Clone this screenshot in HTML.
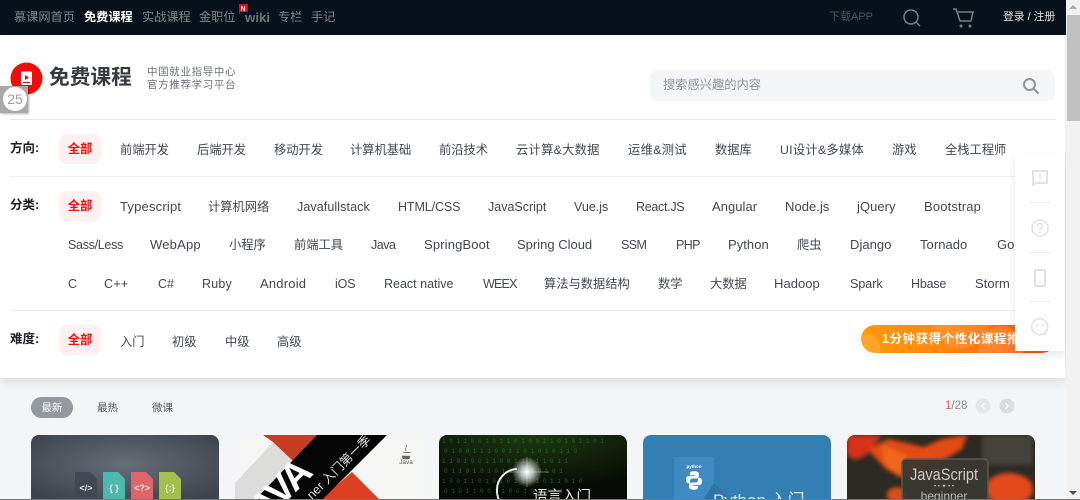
<!DOCTYPE html>
<html lang="zh-CN"><head><meta charset="utf-8"><title>免费课程</title>
<style>
html,body{margin:0;padding:0;width:1080px;height:500px;overflow:hidden}
body{background:#f3f5f7;position:relative;font-family:"Liberation Sans","Noto Sans CJK SC",sans-serif;color:#4d555d}
.a{position:absolute;white-space:nowrap}
#hd{position:absolute;left:0;top:0;width:1066px;height:34.5px;background:#07111b}
#hd span{position:absolute;top:9px;font-size:12.2px;line-height:17px;color:#80858a;white-space:nowrap}
#panel{position:absolute;left:0;top:35px;width:1065px;height:343px;background:#fff;box-shadow:0 4px 8px rgba(7,17,27,.1)}
.f span{position:absolute;font-size:12.5px;line-height:18px;color:#41484f;white-space:nowrap}
.f .c{font-size:12.25px}
.f .w{font-size:13px}
.lbl{position:absolute;left:10px;font-size:12.5px;font-weight:700;color:#1c1f21;line-height:18px}
.on{position:absolute;left:59px;width:42px;height:30px;background:#fdf0f0;border-radius:8px;color:#f20d0d;font-size:12.3px;font-weight:700;line-height:31px;text-align:center}
.ln{position:absolute;left:10px;width:1046px;height:1px;background:#eceef0}
.card{position:absolute;top:435px;width:188px;height:64px;border-radius:8px 8px 0 0;overflow:hidden}
.card svg{display:block}
</style></head><body>
<div id="hd">
<span style="left:14px">慕课网首页</span>
<span style="left:84px;color:#fff;font-weight:700">免费课程</span>
<span style="left:142px">实战课程</span>
<span style="left:199px">金职位</span>
<span style="left:245px;font-size:13.3px;font-weight:700;color:#6f747a">wiki</span>
<span style="left:278px">专栏</span>
<span style="left:311px">手记</span>
<span style="left:829px;font-size:11px;color:#4c535a">下载APP</span>
<span style="left:1003px;font-size:10.8px;color:#e2e3e4">登录 / 注册</span>
<svg class="a" style="left:238px;top:3px" width="10" height="12"><path d="M1 1h9v8H2.300L1 12z" fill="#e00d0d"/><text x="2.500" y="8" font-size="7" font-weight="700" fill="#fff" font-family="Liberation Sans">N</text></svg>
<svg class="a" style="left:902px;top:8px" width="20" height="20" fill="none" stroke="#787d82" stroke-width="1.500"><circle cx="9" cy="9" r="7"/><path d="M14 14l4 4"/></svg>
<svg class="a" style="left:952px;top:7px" width="24" height="22" fill="none" stroke="#787d82" stroke-width="1.500"><path d="M1 2h3l4 12h11l2-9H6"/><circle cx="9" cy="19" r=".8"/><circle cx="18" cy="19" r=".8"/></svg>
</div>

<div id="panel"></div>

<svg class="a" style="left:10px;top:62px" width="33" height="33"><circle cx="16.500" cy="16.500" r="16" fill="#f20d0d"/><path d="M11 10.500a1 1 0 0 1 1-1h9a1 1 0 0 1 1 1V23H12a1 1 0 0 1-1-1z" fill="#fff"/><path d="M15 13l4 2.500-4 2.500z" fill="#f20d0d"/><path d="M13 20.500h7" stroke="#f20d0d"/></svg>
<div class="a" style="left:49px;top:64px;font-size:20.7px;font-weight:700;line-height:28px;color:#363a3e">免费课程</div>
<div class="a" style="left:147px;top:66px;font-size:10.500px;line-height:12.500px;color:#6d7278;letter-spacing:.65px">中国就业指导中心<br>官方推荐学习平台</div>
<div class="a" style="left:0;top:86px;width:28px;height:27px;background:#a9a9a9;box-shadow:1px 1px 2px rgba(0,0,0,.3)"></div>
<div class="a" style="left:3px;top:87px;width:24px;height:24px;border-radius:50%;background:#fff;color:#a0a0a0;font-size:14px;line-height:24px;text-align:center">25</div>

<div class="a" style="left:650px;top:70px;width:405px;height:31px;background:#f3f5f7;border-radius:8px"></div>
<div class="a" style="left:663px;top:77px;font-size:12.250px;line-height:17px;color:#8e959c">搜索感兴趣的内容</div>
<svg class="a" style="left:1022px;top:77px" width="18" height="18" fill="none" stroke="#8e959c" stroke-width="2"><circle cx="7.500" cy="7.500" r="5.500"/><path d="M11.500 11.500l5 5"/></svg>
<div class="ln" style="top:119px;background:#e3e5e7"></div>

<div class="lbl" style="top:139px">方向:</div><div class="on" style="top:134px">全部</div>
<div class="f">
<span class="c" style="top:141px;left:120px">前端开发</span><span class="c" style="top:141px;left:197px">后端开发</span><span class="c" style="top:141px;left:274px">移动开发</span><span class="c" style="top:141px;left:350px">计算机基础</span><span class="c" style="top:141px;left:439px">前沿技术</span><span class="c" style="top:141px;left:516px;letter-spacing:.3px">云计算&amp;大数据</span><span class="c" style="top:141px;left:628px;letter-spacing:.35px">运维&amp;测试</span><span class="c" style="top:141px;left:715px">数据库</span><span class="c" style="top:141px;left:780px;letter-spacing:.3px">UI设计&amp;多媒体</span><span class="c" style="top:141px;left:892px">游戏</span><span class="c" style="top:141px;left:945px">全栈工程师</span>

<span class="w" style="top:198px;left:120px;letter-spacing:.2px">Typescript</span><span class="c" style="top:198px;left:208px">计算机网络</span><span style="top:198px;left:297px;letter-spacing:.1px">Javafullstack</span><span style="top:198px;left:398px;letter-spacing:-.1px">HTML/CSS</span><span style="top:198px;left:488px">JavaScript</span><span style="top:198px;left:574px">Vue.js</span><span style="top:198px;left:636px;letter-spacing:-.3px">React.JS</span><span class="w" style="top:198px;left:712px;letter-spacing:.05px">Angular</span><span class="w" style="top:198px;left:785px;letter-spacing:.05px">Node.js</span><span class="w" style="top:198px;left:857px;letter-spacing:.05px">jQuery</span><span class="w" style="top:198px;left:924px;letter-spacing:.15px">Bootstrap</span>

<span style="top:236px;left:68px;letter-spacing:-.3px">Sass/Less</span><span class="w" style="top:236px;left:150px;letter-spacing:.2px">WebApp</span><span class="c" style="top:236px;left:229px">小程序</span><span class="c" style="top:236px;left:294px">前端工具</span><span style="top:236px;left:371px;letter-spacing:-.5px">Java</span><span class="w" style="top:236px;left:424px;letter-spacing:.15px">SpringBoot</span><span class="w" style="top:236px;left:517px">Spring Cloud</span><span style="top:236px;left:621px;letter-spacing:-.6px">SSM</span><span style="top:236px;left:676px;letter-spacing:-.6px">PHP</span><span class="w" style="top:236px;left:728px;letter-spacing:.05px">Python</span><span class="c" style="top:236px;left:797px">爬虫</span><span class="w" style="top:236px;left:850px;letter-spacing:.05px">Django</span><span class="w" style="top:236px;left:920px;letter-spacing:.05px">Tornado</span><span class="w" style="top:236px;left:997px">Go</span>

<span style="top:275px;left:68px">C</span><span style="top:275px;left:104px;letter-spacing:.3px">C++</span><span style="top:275px;left:158px">C#</span><span style="top:275px;left:202px;letter-spacing:.2px">Ruby</span><span class="w" style="top:275px;left:260px;letter-spacing:.2px">Android</span><span style="top:275px;left:335px;letter-spacing:-.2px">iOS</span><span style="top:275px;left:384px">React native</span><span style="top:275px;left:483px;letter-spacing:-.8px">WEEX</span><span class="c" style="top:275px;left:544px">算法与数据结构</span><span class="c" style="top:275px;left:658px">数学</span><span class="c" style="top:275px;left:710px">大数据</span><span class="w" style="top:275px;left:774px;letter-spacing:.05px">Hadoop</span><span style="top:275px;left:850px">Spark</span><span style="top:275px;left:911px;letter-spacing:-.2px">Hbase</span><span class="w" style="top:275px;left:975px;letter-spacing:.05px">Storm</span>

<span class="c" style="top:333px;left:120px">入门</span><span class="c" style="top:333px;left:172px">初级</span><span class="c" style="top:333px;left:225px">中级</span><span class="c" style="top:333px;left:277px">高级</span>
</div>
<div class="ln" style="top:176px"></div>
<div class="lbl" style="top:196px">分类:</div><div class="on" style="top:191px">全部</div>
<div class="ln" style="top:310px"></div>
<div class="lbl" style="top:330px">难度:</div><div class="on" style="top:325px">全部</div>

<div class="a" style="left:861px;top:325px;width:195px;height:28px;border-radius:14px;background:radial-gradient(circle at 140px 24px,rgba(255,255,255,.14) 0 22px,transparent 23px),radial-gradient(circle at 100px -5px,rgba(255,255,255,.1) 0 28px,transparent 29px),radial-gradient(circle at 5px 24px,rgba(255,255,255,.12) 0 14px,transparent 15px),linear-gradient(90deg,#ff9a0a 0%,#ff8610 45%,#ff4d05 100%);overflow:hidden;color:#fff;font-size:12.500px;font-weight:700;line-height:29px;letter-spacing:.55px;text-indent:21px">1分钟获得个性化课程推荐</div>

<div class="a" style="left:1015px;top:155px;width:50px;height:196px;background:#fff;box-shadow:0 4px 8px rgba(7,17,27,.1)"></div>
<div class="a" style="left:1029px;top:201.500px;width:22px;height:1px;background:#eceef0"></div>
<div class="a" style="left:1029px;top:251.500px;width:22px;height:1px;background:#eceef0"></div>
<div class="a" style="left:1029px;top:301px;width:22px;height:1px;background:#eceef0"></div>
<svg class="a" style="left:1030px;top:168px" width="20" height="20" fill="none" stroke="#dfe2e6" stroke-width="2"><path d="M3 3h14v12H6l-3 2z"/><path d="M10 6v4M10 11.500v1.500" stroke-width="1.500"/></svg>
<svg class="a" style="left:1030px;top:218px" width="20" height="20" fill="none" stroke="#dfe2e6" stroke-width="1.600"><circle cx="10" cy="10" r="8"/><path d="M7.500 8a2.500 2.500 0 1 1 3.500 2.300c-.7.400-1 .9-1 1.700M10 13.500V15"/></svg>
<svg class="a" style="left:1030px;top:268px" width="20" height="20" fill="none" stroke="#dfe2e6" stroke-width="2"><rect x="5" y="2" width="10" height="16" rx="1"/><path d="M9.500 15h1"/></svg>
<svg class="a" style="left:1030px;top:317px" width="20" height="20" fill="none" stroke="#dfe2e6" stroke-width="1.600" stroke-linecap="round"><path d="M15 17.500l.2-2A8 8 0 1 0 13 17z"/><path d="M7 8v.6M13 8v.6" stroke-width="2"/></svg>

<div class="a" style="left:31px;top:397px;width:42px;height:21px;border-radius:11px;background:#93999f;color:#fff;font-size:10.500px;line-height:22px;text-align:center">最新</div>
<div class="a" style="left:97px;top:400px;font-size:10.500px;line-height:16px;color:#4d555d">最热</div>
<div class="a" style="left:152px;top:400px;font-size:10.500px;line-height:16px;color:#4d555d">微课</div>
<div class="a" style="left:945px;top:398px;font-size:11.500px;line-height:16px;color:#858b91"><span style="color:#e8604a">1</span>/28</div>
<svg class="a" style="left:975px;top:398px" width="40" height="16" fill="none" stroke="#fff" stroke-width="1.300"><circle cx="8" cy="8" r="7.500" fill="#e4e7ea" stroke="none"/><circle cx="32" cy="8" r="7.500" fill="#d9dde1" stroke="none"/><path d="M9.500 5L7 8l2.500 3M30.500 5L33 8l-2.500 3"/></svg>

<div class="card" style="left:31px"><svg width="188" height="65"><defs><radialGradient id="g1" cx="50%" cy="45%" r="65%"><stop offset="0" stop-color="#656e78"/><stop offset="1" stop-color="#3d444e"/></radialGradient></defs><rect width="188" height="65" fill="url(#g1)"/>
<path d="M44 37h15l7 7v21H44z" fill="#3f4853"/><path d="M72 37h15l7 7v21H72z" fill="#4cb8ae"/><path d="M100 37h15l7 7v21h-22z" fill="#e0656a"/><path d="M128 37h15l7 7v21h-22z" fill="#a3c14a"/>
<g font-family="Liberation Sans" font-size="9" font-weight="700" fill="#e8e8e8" text-anchor="middle"><text x="55" y="56">&lt;/&gt;</text><text x="83" y="56">{ }</text><text x="111" y="56">&lt;?&gt;</text><text x="139" y="56">{:}</text></g></svg></div>

<div class="card" style="left:235px"><svg width="188" height="65"><rect width="188" height="65" fill="#f6f6f4"/><path d="M0 48L45 0h37L20 65H0z" fill="#dcdcda"/><path d="M28 0h54L58 26 38 7z" fill="#c63d22"/><path d="M117 37l28 28H85z" fill="#dd3f22"/><path d="M82 0h70L87 65H20z" fill="#050505"/>
<text transform="translate(16 102) rotate(-45)" font-family="Liberation Sans" font-weight="700" font-size="38" fill="#fff" letter-spacing="-2">JAVA</text>
<text transform="translate(77 65) rotate(-45)" font-family="Liberation Sans,Noto Sans CJK SC,sans-serif" font-size="12.500" fill="#ddd">ner 入门第一季</text>
<text x="171" y="29" font-family="Liberation Sans" font-size="6.500" fill="#555" text-anchor="middle">Java</text><path d="M167 21h8l-1 3h-6zM171 10c2 2-2 3 0 6M168 17c2 1 6 1 8 0" fill="#666" stroke="#666" stroke-width=".6"/></svg></div>

<div class="card" style="left:439px"><svg width="188" height="65"><defs><radialGradient id="g3" cx="50%" cy="0%" r="85%"><stop offset="0" stop-color="#1d3a12"/><stop offset="1" stop-color="#080a05"/></radialGradient><radialGradient id="g4"><stop offset="0" stop-color="#fff"/><stop offset=".35" stop-color="#eee" stop-opacity=".8"/><stop offset="1" stop-color="#fff" stop-opacity="0"/></radialGradient></defs><rect width="188" height="65" fill="url(#g3)"/>
<g font-family="Liberation Mono" font-size="6" fill="#2f8a30" opacity=".65"><text x="3" y="8">1 0 1 1 0 0 1 0 1 1 0 1 0 0 1 1 0 1 0 1 1 0 1</text><text x="5" y="18">0 1 0 0 1 1   1 0     0 1 1 0 1 0 1 0 1 1 0</text><text x="3" y="28">1 1 0 1 0     0 1     1 0 0 1 1 0 1 1 0 1 1</text><text x="5" y="38">0 1 1 0 1 0     1       0 1 0 0 1 1 0 1 0 1</text><text x="3" y="48">1 0 0 1 1 0 1 0     1 0 1 1 0 1 0 1 1 0 1 0</text><text x="5" y="58">0 1 0 1 1 0       0   1 1 0 0 1 0 1 1 0 1 0</text></g>
<path d="M78 34a21 21 0 0 0-20 22c0 4 1 7 2 9" fill="none" stroke="#eee" stroke-width="2"/>
<circle cx="88" cy="37" r="15" fill="url(#g4)"/><path d="M66 37h44M88 22v30" stroke="#fff" stroke-width=".5" opacity=".6"/>
<text x="94" y="66" font-family="Liberation Sans,Noto Sans CJK SC,sans-serif" font-size="14.500" fill="#eee">语言入门</text></svg></div>

<div class="card" style="left:643px"><svg width="188" height="65"><rect width="188" height="65" fill="#337fb3"/><path d="M31 22h40v29l14 14H31z" fill="#3f8bc1"/><path d="M71 48l17 17H60z" fill="#2e73a3"/>
<text x="51" y="33" font-family="Liberation Sans" font-size="4.500" font-weight="700" fill="#fff" text-anchor="middle">python</text>
<g transform="translate(51 45.500) scale(.8) translate(-50 -46.500)"><path d="M50 35c-4 0-5 1-5 3v2h6v1h-8c-2 0-3 2-3 4 0 3 1 5 3 5h2v-3c0-2 2-3 3-3h5c2 0 3-1 3-3v-3c0-2-2-3-6-3z" fill="#fff"/><path d="M50 58c4 0 5-1 5-3v-2h-6v-1h8c2 0 3-2 3-4 0-3-1-5-3-5h-2v3c0 2-2 3-3 3h-5c-2 0-3 1-3 3v3c0 2 2 3 6 3z" fill="#fff"/></g>
<text x="70" y="71" font-family="Liberation Sans,Noto Sans CJK SC,sans-serif" font-size="17" fill="#dfeaf3">Python 入门</text></svg></div>

<div class="card" style="left:847px"><svg width="188" height="65"><defs><filter id="b"><feGaussianBlur stdDeviation="2"/></filter></defs><rect width="188" height="65" fill="#2d2a22"/><g filter="url(#b)"><path d="M20 14L42 4l35 8 18-8 25-4-5 14-20 12-14 10-20 10-22-12z" fill="#e34c17"/><path d="M0 0h35L20 20 8 25 0 20z" fill="#d6331a"/><path d="M35 10l25 10-8 22-15-14z" fill="#f0661f"/><ellipse cx="162" cy="54" rx="24" ry="16" fill="#e4481a"/><ellipse cx="50" cy="60" rx="10" ry="8" fill="#d85015"/><rect x="135" y="0" width="50" height="30" fill="#45433a"/></g>
<path d="M55 30q-1-6 5-6h76q6 0 5 6v35H55z" fill="#3a3833" stroke="#5b5c55" stroke-width="1.500" opacity=".95"/>
<text x="97" y="45" font-family="Liberation Sans" font-size="17" fill="#cfcdc8" text-anchor="middle" textLength="68" lengthAdjust="spacingAndGlyphs">JavaScript</text>
<text x="97" y="53" font-family="Liberation Sans" font-size="6" fill="#bbb" text-anchor="middle">• • ✦ • •</text>
<text x="97" y="65" font-family="Liberation Sans" font-size="12" fill="#bbb" text-anchor="middle">beginner</text></svg></div>

<div class="a" style="left:1066px;top:0;width:14px;height:499px;background:#f1f1f1"></div>
<div class="a" style="left:1067px;top:15px;width:13px;height:106px;background:#c1c1c1"></div>
<svg class="a" style="left:1068px;top:4px" width="10" height="6"><path d="M5 1l4 4H1z" fill="#a8a8a8"/></svg>
<svg class="a" style="left:1068px;top:490px" width="10" height="6"><path d="M5 5L1 1h8z" fill="#505050"/></svg>
<div class="a" style="left:0;top:499px;width:1080px;height:1px;background:#777"></div>
</body></html>
